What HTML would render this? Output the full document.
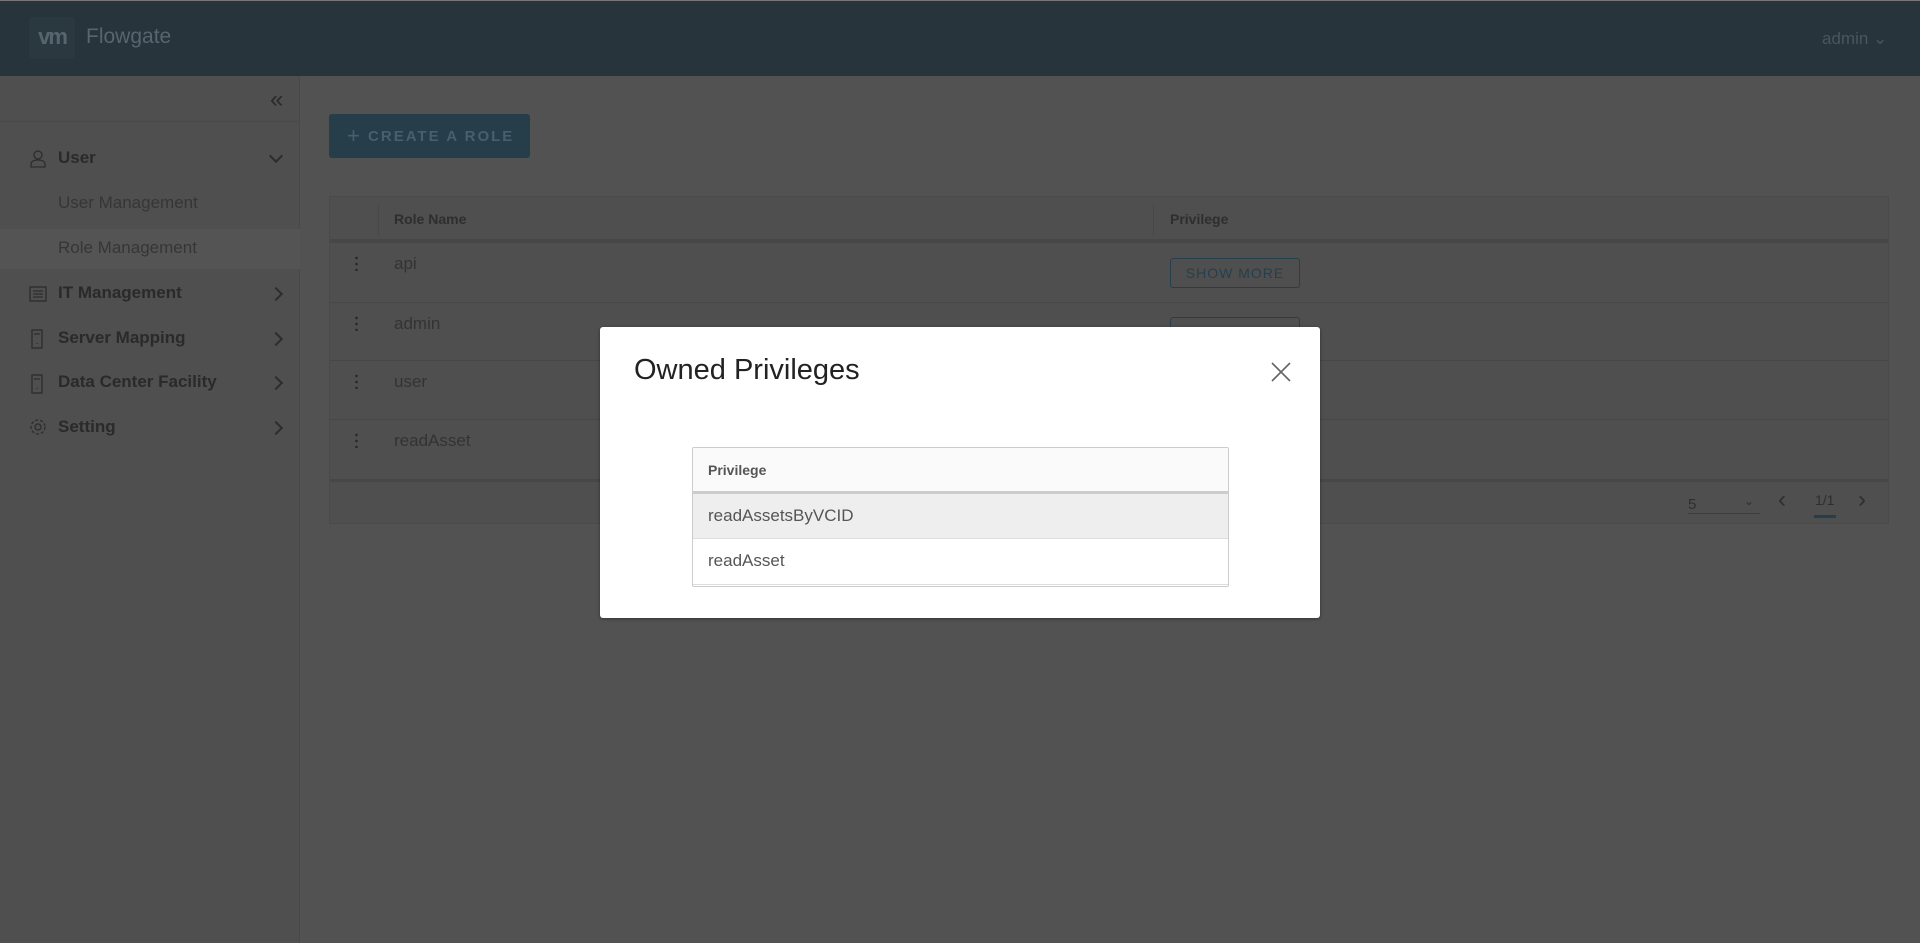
<!DOCTYPE html>
<html><head><meta charset="utf-8"><style>
*{box-sizing:border-box;margin:0;padding:0}
body{width:1920px;height:943px;overflow:hidden;background:#525252;font-family:"Liberation Sans",sans-serif;position:relative}
.abs{position:absolute}
.hdr{left:0;top:0;width:1920px;height:76px;background:#27343c;border-top:1px solid #777}
.side{left:0;top:76px;width:300px;height:867px;background:#4f4f4f;border-right:1px solid #494949}
.mi{position:absolute;left:58px;font-size:17px;color:#2a2a2a;font-weight:bold}
.si{position:absolute;left:58px;font-size:17px;color:#363636}
.chev{position:absolute;left:271px;width:10px;height:10px;border-top:2px solid #2d2d2d;border-right:2px solid #2d2d2d;transform:rotate(45deg)}
.tbl{left:329px;top:196px;width:1560px;height:328px;border:1px solid #4a4a4a;background:#4f4f4f}
.row{position:absolute;left:0;width:100%;border-top:1px solid #474747}
.cell{position:absolute;left:64px;font-size:17px;color:#333}
.dots{position:absolute;left:25px;width:3px;height:16px;background:radial-gradient(circle,#2a2a2a 1.2px,transparent 1.5px) 0 0/3px 6px repeat-y}
.sm{position:absolute;left:840px;width:130px;height:30px;border:1px solid #263f4c;border-radius:3px;color:#263f4c;font-size:14px;letter-spacing:1px;text-align:center;line-height:28px}
.modal{left:600px;top:327px;width:720px;height:291px;background:#fff;border-radius:3px;box-shadow:0 1px 3px rgba(0,0,0,.4)}
</style></head><body>
<div class="abs hdr">
 <div class="abs" style="left:29px;top:16px;width:46px;height:42px;background:#2a3840;border-radius:3px;color:#56656e;font-weight:bold;font-size:22px;line-height:40px;text-align:center;letter-spacing:-2px">vm</div>
 <div class="abs" style="left:86px;top:24px;font-size:21px;color:#56656e">Flowgate</div>
 <div class="abs" style="left:1822px;top:28px;font-size:17px;color:#47565f">admin ⌄</div>
</div>
<div class="abs side">
 <div class="abs" style="left:270px;top:10px;font-size:24px;color:#2a2a2a">«</div>
 <div class="abs" style="left:0;top:45px;width:300px;border-top:1px solid #494949"></div>
 <svg class="abs" style="left:30px;top:74px" width="16" height="18" viewBox="0 0 16 18" fill="none" stroke="#2d2d2d" stroke-width="1.3"><circle cx="8" cy="5" r="4"/><path d="M1 17v-3c0-2 2-4 7-4s7 2 7 4v3z"/></svg>
 <div class="mi" style="top:72px">User</div>
 <div class="abs" style="left:271px;top:75px;width:10px;height:10px;border-right:2px solid #2d2d2d;border-bottom:2px solid #2d2d2d;transform:rotate(45deg)"></div>
 <div class="si" style="top:117px">User Management</div>
 <div class="abs" style="left:0;top:153px;width:300px;height:40px;background:#545454"></div>
 <div class="si" style="top:162px">Role Management</div>
 <svg class="abs" style="left:29px;top:210px" width="18" height="16" viewBox="0 0 18 16" fill="none" stroke="#2d2d2d" stroke-width="1.3"><rect x="1" y="1" width="16" height="14"/><path d="M4 5h10M4 8h10M4 11h10"/></svg>
 <div class="mi" style="top:207px">IT Management</div><div class="chev" style="top:213px"></div>
 <svg class="abs" style="left:31px;top:253px" width="12" height="20" viewBox="0 0 12 20" fill="none" stroke="#2d2d2d" stroke-width="1.3"><rect x="1" y="1" width="10" height="18"/><path d="M3 5h6M6 14v1"/></svg>
 <div class="mi" style="top:252px">Server Mapping</div><div class="chev" style="top:258px"></div>
 <svg class="abs" style="left:31px;top:298px" width="12" height="20" viewBox="0 0 12 20" fill="none" stroke="#2d2d2d" stroke-width="1.3"><rect x="1" y="1" width="10" height="18"/><path d="M3 5h6M6 14v1"/></svg>
 <div class="mi" style="top:296px">Data Center Facility</div><div class="chev" style="top:302px"></div>
 <svg class="abs" style="left:29px;top:342px" width="18" height="18" viewBox="0 0 18 18" fill="none" stroke="#2d2d2d" stroke-width="1.3"><circle cx="9" cy="9" r="3"/><circle cx="9" cy="9" r="7" stroke-dasharray="3 2"/></svg>
 <div class="mi" style="top:341px">Setting</div><div class="chev" style="top:347px"></div>
</div>
<div class="abs" style="left:329px;top:114px;width:201px;height:44px;background:#263d4a;border-radius:3px;color:#46606e;font-size:15px;font-weight:bold;letter-spacing:2px;line-height:44px;padding-left:18px"><span style="font-weight:normal;font-size:22px;vertical-align:-2px">+</span> CREATE A ROLE</div>
<div class="abs tbl">
 <div class="row" style="top:0;height:45px;border-top:none;border-bottom:3px solid #474747"></div>
 <div class="abs" style="left:48px;top:8px;height:30px;border-left:1px solid #474747"></div>
 <div class="abs" style="left:823px;top:8px;height:30px;border-left:1px solid #474747"></div>
 <div class="abs" style="left:64px;top:14px;font-size:14px;font-weight:bold;color:#2e2e2e">Role Name</div>
 <div class="abs" style="left:840px;top:14px;font-size:14px;font-weight:bold;color:#2e2e2e">Privilege</div>
 <div class="row" style="top:45px;height:60px"><div class="dots" style="top:12px"></div><div class="cell" style="top:11px">api</div><div class="sm" style="top:15px">SHOW MORE</div></div>
 <div class="row" style="top:105px;height:58px"><div class="dots" style="top:12px"></div><div class="cell" style="top:11px">admin</div><div class="sm" style="top:14px">SHOW MORE</div></div>
 <div class="row" style="top:163px;height:59px"><div class="dots" style="top:12px"></div><div class="cell" style="top:11px">user</div></div>
 <div class="row" style="top:222px;height:60px"><div class="dots" style="top:12px"></div><div class="cell" style="top:11px">readAsset</div></div>
 <div class="row" style="top:282px;height:46px;border-top:3px solid #474747">
  <div class="abs" style="left:1358px;top:14px;width:72px;height:18px;border-bottom:1px solid #3e3e3e;font-size:15px;color:#2e2e2e">5<span style="position:absolute;right:6px;top:-2px;font-size:12px">⌄</span></div>
  <div class="abs" style="left:1448px;top:4px;font-size:24px;color:#2e2e2e">‹</div>
  <div class="abs" style="left:1485px;top:10px;font-size:14px;color:#2e2e2e">1/1</div>
  <div class="abs" style="left:1484px;top:33px;width:22px;height:3px;background:#263d4a"></div>
  <div class="abs" style="left:1528px;top:4px;font-size:24px;color:#2e2e2e">›</div>
 </div>
</div>
<div class="abs modal">
 <div class="abs" style="left:34px;top:27px;font-size:29px;color:#222">Owned Privileges</div>
 <svg class="abs" style="left:671px;top:35px" width="20" height="20" viewBox="0 0 20 20" stroke="#666" stroke-width="1.6"><path d="M1 1l18 18M19 1L1 19"/></svg>
 <div class="abs" style="left:92px;top:120px;width:537px;height:140px;border:1px solid #ccc;border-radius:2px;overflow:hidden">
  <div class="abs" style="left:0;top:0;width:100%;height:46px;background:#fafafa;border-bottom:3px solid #ccc"></div>
  <div class="abs" style="left:15px;top:14px;font-size:14px;font-weight:bold;color:#555">Privilege</div>
  <div class="abs" style="left:0;top:46px;width:100%;height:45px;background:#eee;border-bottom:1px solid #ddd"></div>
  <div class="abs" style="left:15px;top:58px;font-size:17px;color:#555">readAssetsByVCID</div>
  <div class="abs" style="left:15px;top:103px;font-size:17px;color:#555">readAsset</div>
  <div class="abs" style="left:0;top:136px;width:100%;border-top:1px solid #ddd"></div>
 </div>
</div>
</body></html>
